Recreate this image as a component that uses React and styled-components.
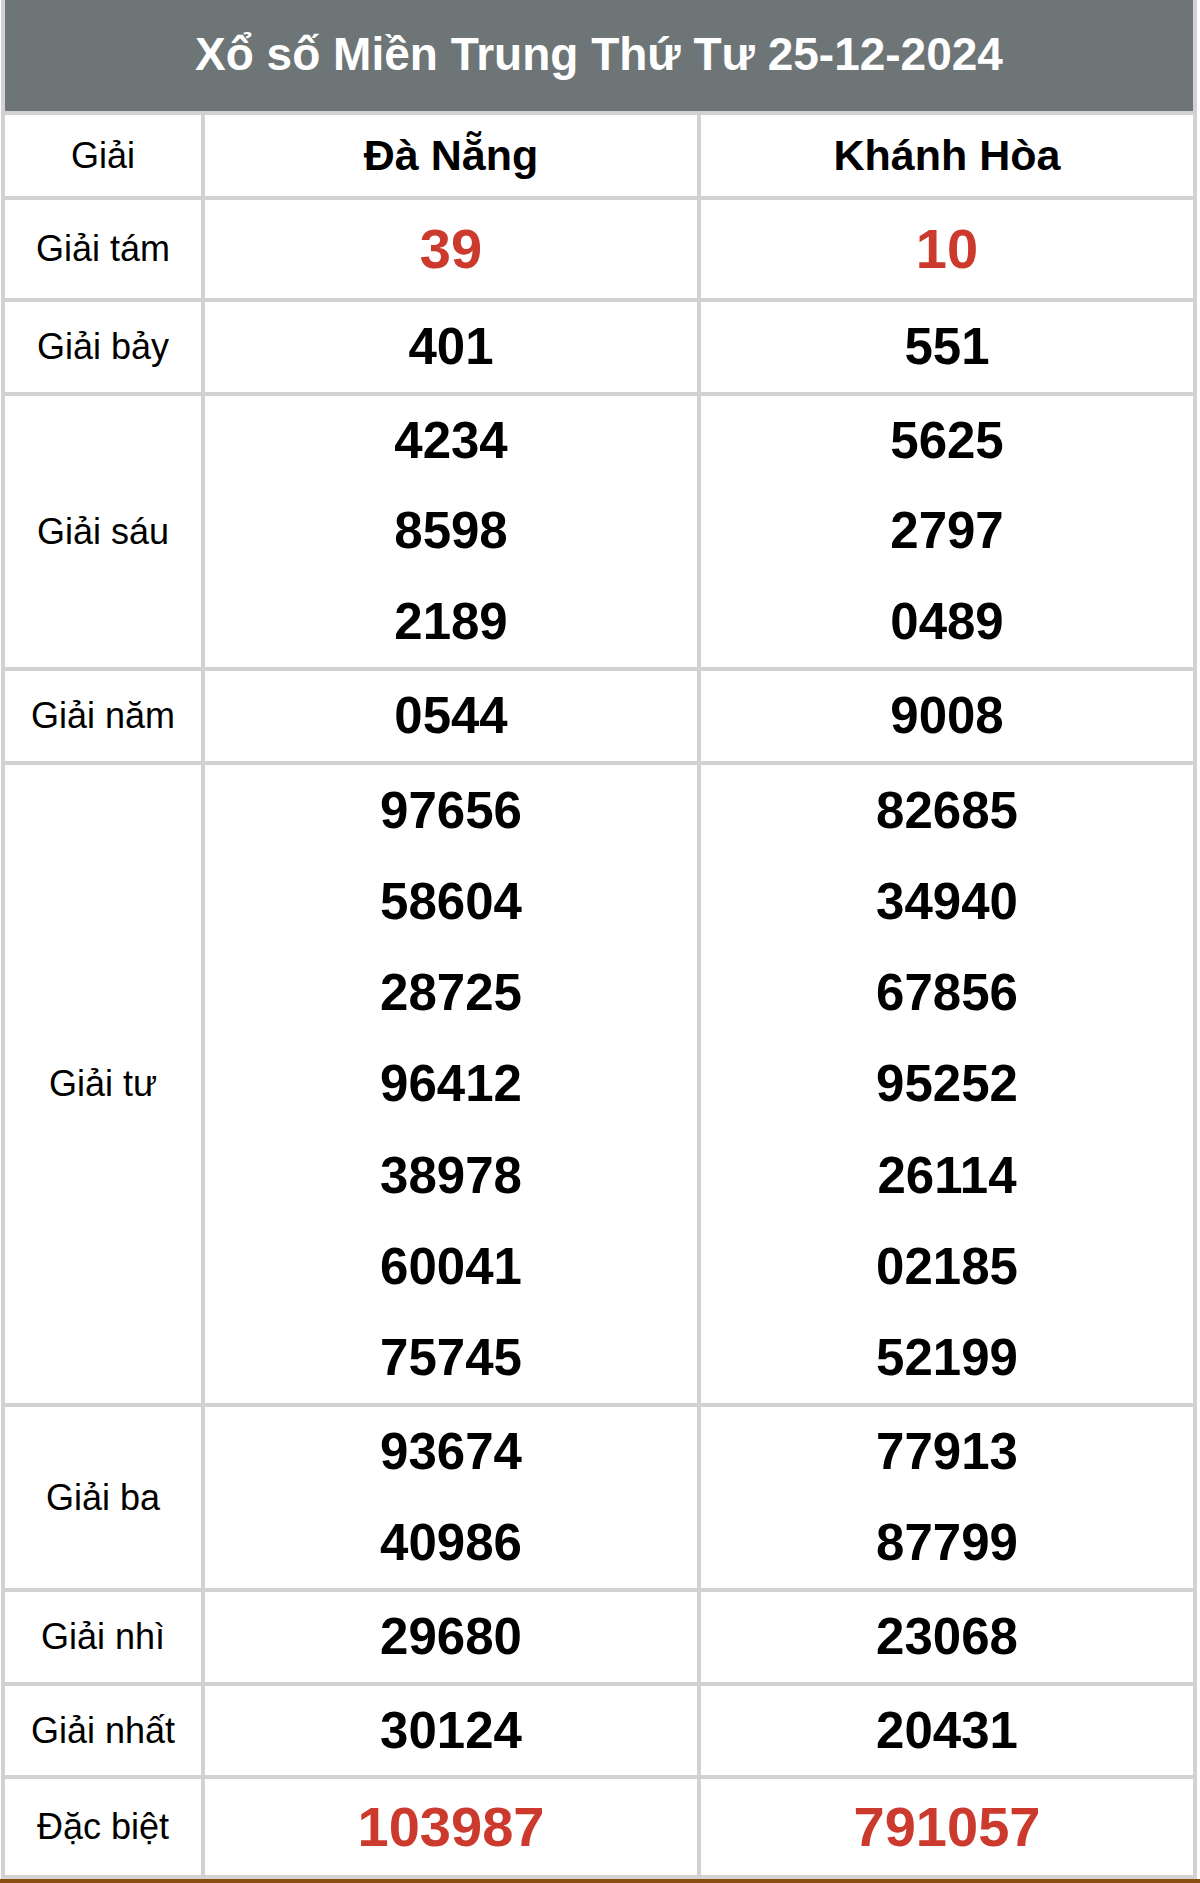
import styled, { createGlobalStyle } from "styled-components";

const GlobalStyle = createGlobalStyle`
    html, body {
        margin: 0;
        padding: 0;
        background: #ffffff;
    }

    body {
        font-family: "Liberation Sans", Arial, Helvetica, sans-serif;
        color: #000000;
    }
`;

const provinces = ["Đà Nẵng", "Khánh Hòa"];

// h = height of the row content in px, numbers are spread evenly in it
const prizes = [
    { label: "Giải tám", h: 98, red: true, values: [["39"], ["10"]] },
    { label: "Giải bảy", h: 90, values: [["401"], ["551"]] },
    {
        label: "Giải sáu",
        h: 271,
        values: [
            ["4234", "8598", "2189"],
            ["5625", "2797", "0489"],
        ],
    },
    { label: "Giải năm", h: 90, values: [["0544"], ["9008"]] },
    {
        label: "Giải tư",
        h: 638,
        values: [
            ["97656", "58604", "28725", "96412", "38978", "60041", "75745"],
            ["82685", "34940", "67856", "95252", "26114", "02185", "52199"],
        ],
    },
    {
        label: "Giải ba",
        h: 181,
        values: [
            ["93674", "40986"],
            ["77913", "87799"],
        ],
    },
    { label: "Giải nhì", h: 90, values: [["29680"], ["23068"]] },
    { label: "Giải nhất", h: 89, values: [["30124"], ["20431"]] },
    { label: "Đặc biệt", h: 96, red: true, values: [["103987"], ["791057"]] },
];

const App = () => {
    return (
        <>
            <GlobalStyle />
            <Page>
                <Board>
                    <Title>Xổ số Miền Trung Thứ Tư 25-12-2024</Title>

                    <HeadCell>Giải</HeadCell>
                    {provinces.map((name) => (
                        <ProvinceCell key={name}>{name}</ProvinceCell>
                    ))}

                    {prizes.map((prize) => (
                        <PrizeRow key={prize.label} prize={prize} />
                    ))}
                </Board>
                <FooterBar />
            </Page>
        </>
    );
};

const PrizeRow = ({ prize }) => {
    const { label, h, red, values } = prize;
    const lineHeight = h / values[0].length;

    return (
        <>
            <LabelCell $h={h}>{label}</LabelCell>
            {values.map((list, i) => (
                <NumberCell key={i}>
                    {list.map((num, j) => (
                        <Number key={j} $lh={lineHeight} $red={red}>
                            {num}
                        </Number>
                    ))}
                </NumberCell>
            ))}
        </>
    );
};

const Page = styled.div`
    width: 1200px;
`;

const Board = styled.div`
    margin-left: 1px;
    width: 1196px;
    box-sizing: border-box;
    padding: 0 4px 4px;
    background: #d2d2d2;

    display: grid;
    grid-template-columns: 196px 1fr 1fr;
    gap: 4px;
`;

const Title = styled.div`
    grid-column: 1 / -1;
    height: 111px;
    padding-bottom: 3px;
    box-sizing: border-box;
    background: #6d7577;
    color: #ffffff;

    display: flex;
    align-items: center;
    justify-content: center;

    font-size: 46px;
    font-weight: 700;
`;

const Cell = styled.div`
    background: #ffffff;
    display: flex;
    align-items: center;
    justify-content: center;
    text-align: center;
`;

const HeadCell = styled(Cell)`
    height: 81px;
    font-size: 36px;
    font-weight: 400;
`;

const ProvinceCell = styled(Cell)`
    height: 81px;
    font-size: 43px;
    font-weight: 700;
`;

const LabelCell = styled(Cell)`
    height: ${(p) => p.$h}px;
    font-size: 36px;
    font-weight: 400;
`;

const NumberCell = styled(Cell)`
    flex-direction: column;
`;

const Number = styled.div`
    line-height: ${(p) => p.$lh}px;
    font-size: ${(p) => (p.$red ? 56 : 51)}px;
    font-weight: 700;
    color: ${(p) => (p.$red ? "#cb3a2c" : "#000000")};
`;

const FooterBar = styled.div`
    height: 6px;
    background: #8a4d12;
`;

export default App;
